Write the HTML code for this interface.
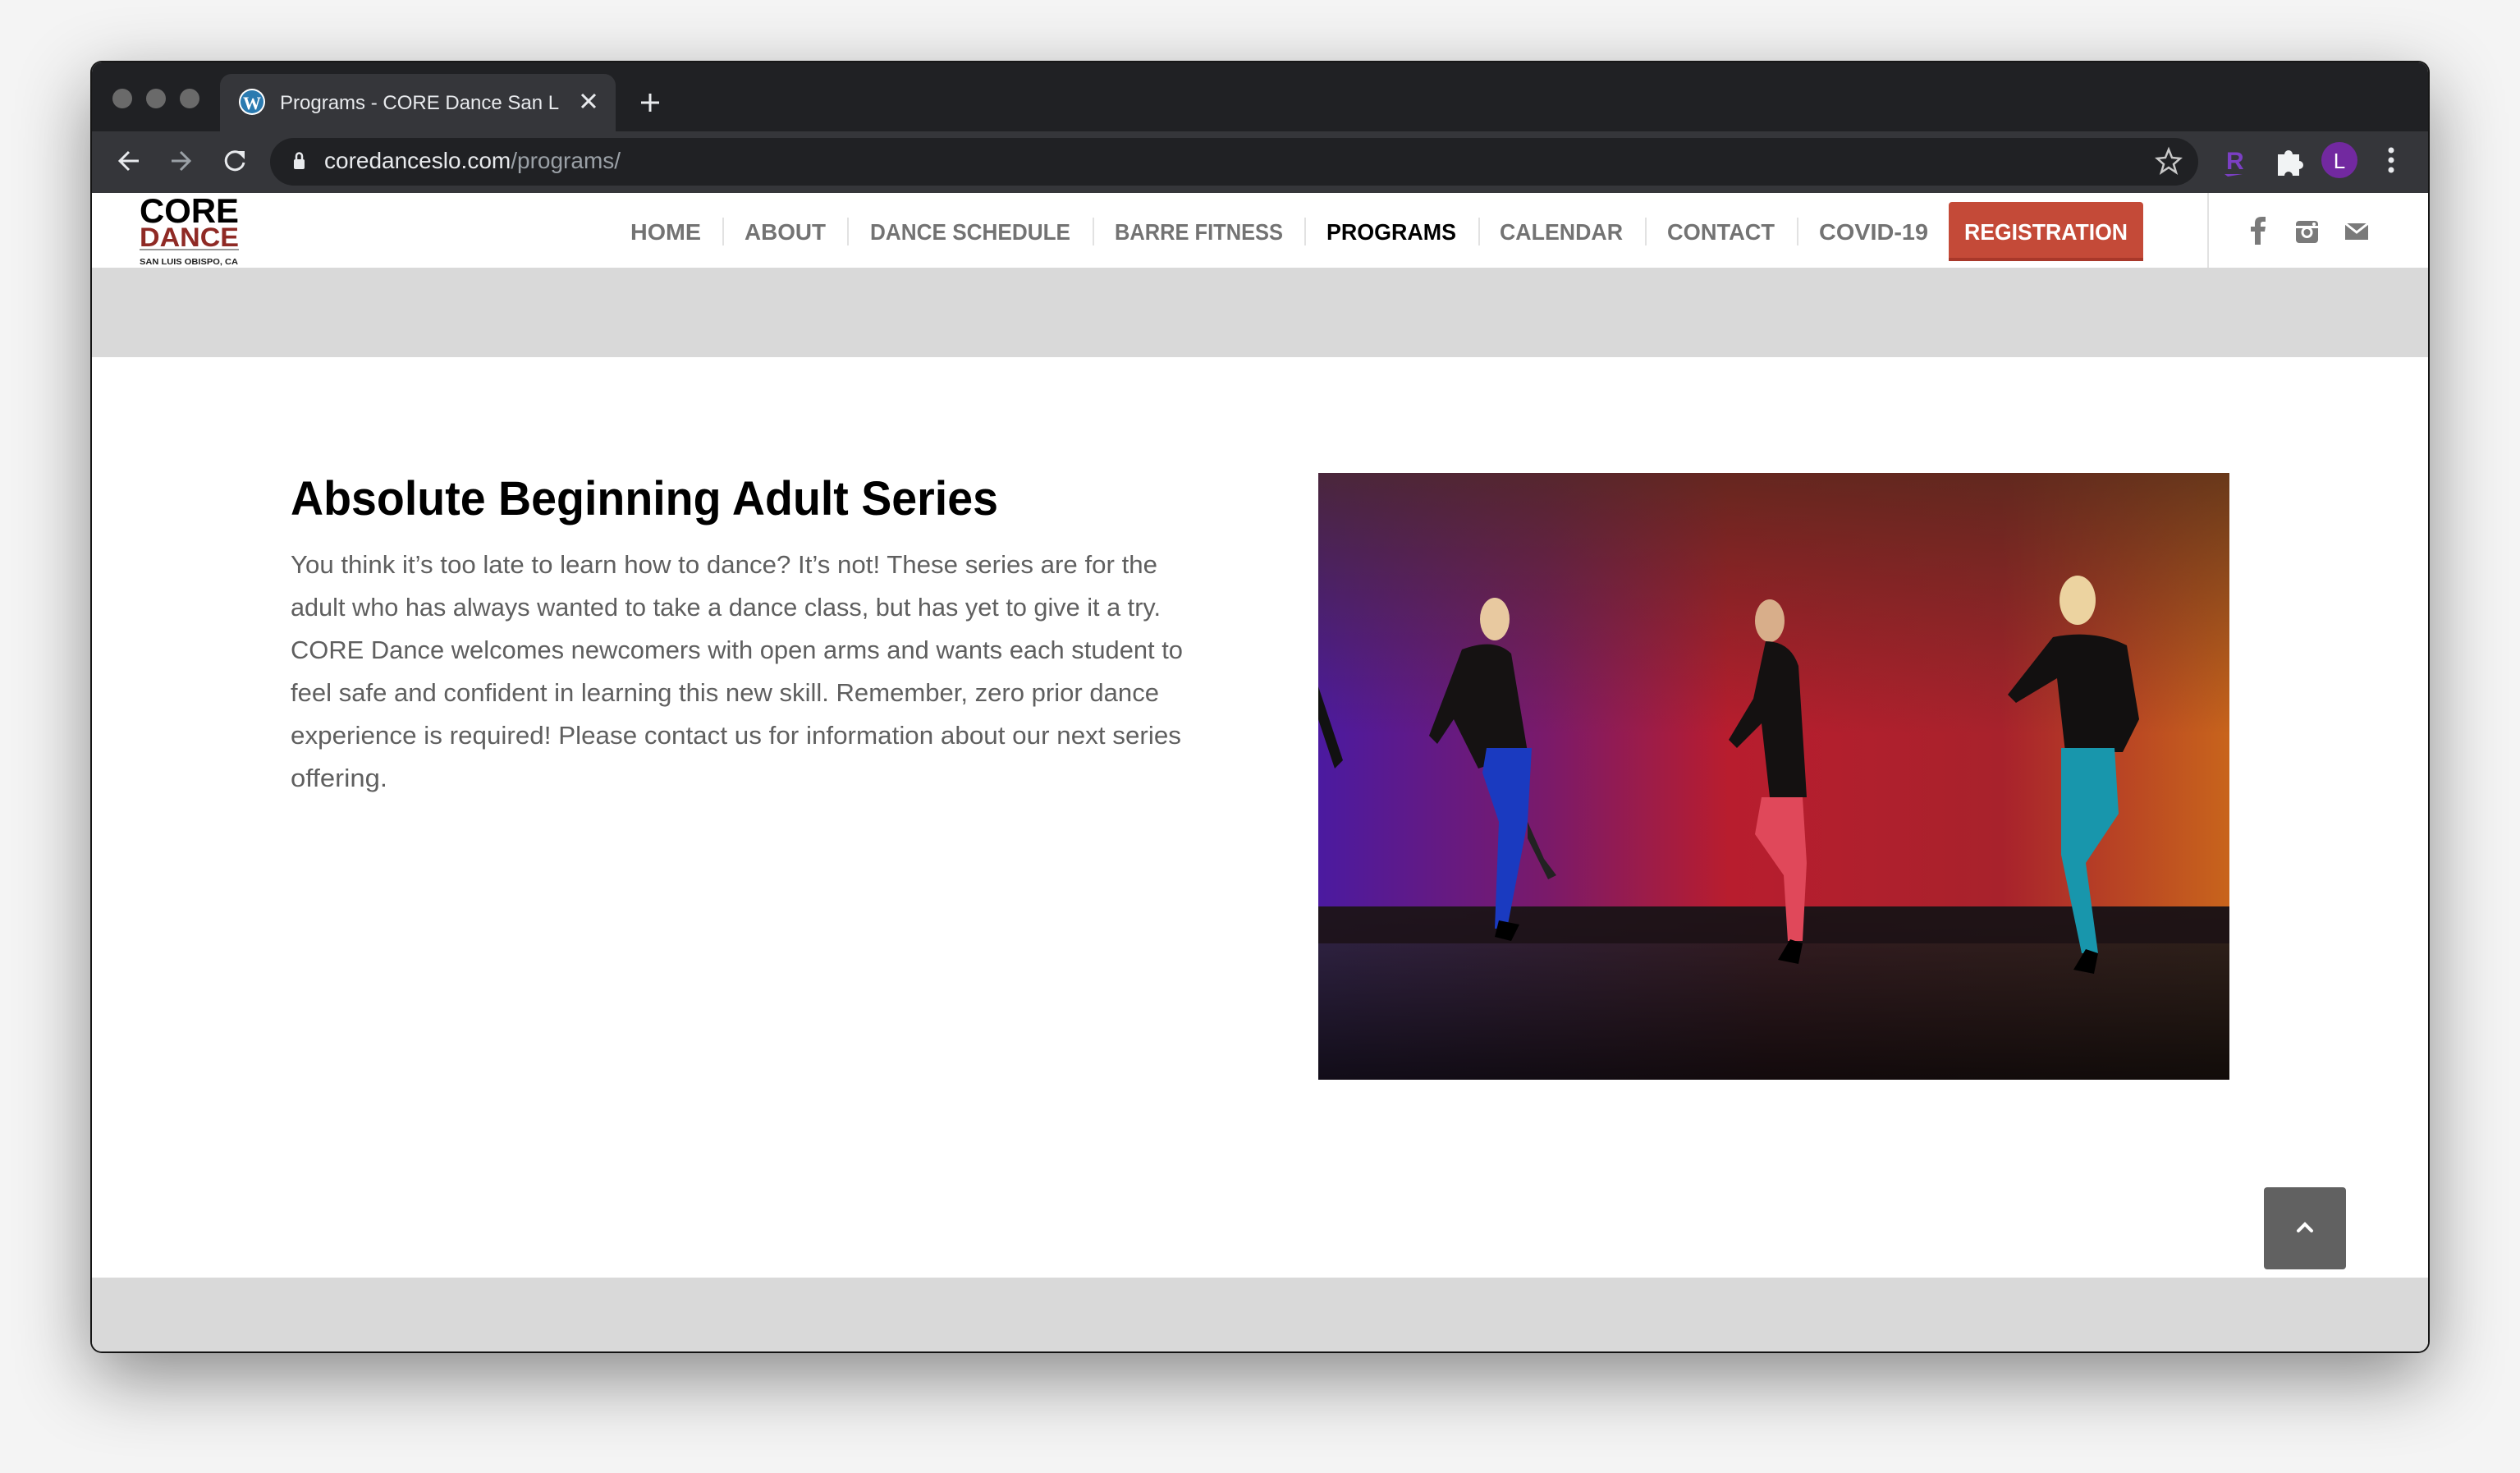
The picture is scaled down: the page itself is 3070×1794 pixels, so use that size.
<!DOCTYPE html>
<html><head><meta charset="utf-8"><style>
*{margin:0;padding:0;box-sizing:border-box}
html,body{width:3070px;height:1794px;overflow:hidden;background:#f4f4f4;font-family:"Liberation Sans",sans-serif}
#win{position:absolute;left:112px;top:76px;width:2846px;height:1570px;border-radius:12px;overflow:hidden;box-shadow:0 30px 90px rgba(0,0,0,.45),0 0 0 2px #1a1a1a;background:#fff}
.abs{position:absolute}
</style></head><body>
<div id="win">
 <div class="abs" style="left:0;top:0;width:2846px;height:84px;background:#202124"></div>
 <div class="abs" style="left:156px;top:14px;width:482px;height:72px;border-radius:14px 14px 0 0;background:#35363a"></div>
 <div class="abs" style="left:0;top:84px;width:2846px;height:75px;background:#35363a"></div>
 <div class="abs" style="left:217px;top:92px;width:2349px;height:58px;border-radius:29px;background:#202124"></div>
 <svg class="abs" style="left:0;top:0" width="2846" height="160">
  <circle cx="37" cy="44" r="12" fill="#6a6a6a"/><circle cx="78" cy="44" r="12" fill="#6a6a6a"/><circle cx="119" cy="44" r="12" fill="#6a6a6a"/>
  <circle cx="195" cy="48" r="16" fill="#fff"/><circle cx="195" cy="48" r="14" fill="#2a7ab0"/><text x="195" y="57" font-size="22" font-weight="bold" fill="#fff" text-anchor="middle" font-family="Liberation Serif">W</text>
  <text x="229" y="57" font-size="24" fill="#e8eaed">Programs - CORE Dance San L</text>
  <path d="M597 39l16 16M613 39l-16 16" stroke="#e8eaed" stroke-width="3"/>
  <path d="M680 38v22M669 49h22" stroke="#e8eaed" stroke-width="3"/>
  <path d="M57 120h-22M45 109l-11 11 11 11" stroke="#e8eaed" stroke-width="3" fill="none"/>
  <path d="M97 120h22M108 109l11 11-11 11" stroke="#9aa0a6" stroke-width="3" fill="none"/>
  <path d="M182 112a11 11 0 1 0 3 10" stroke="#e8eaed" stroke-width="3" fill="none"/><path d="M176 108h10v10z" fill="#e8eaed"/>
  <rect x="246" y="118" width="13" height="12" rx="2" fill="#e8eaed"/><path d="M249 118v-4a3.5 3.5 0 0 1 7 0v4" stroke="#e8eaed" stroke-width="2.5" fill="none"/>
  <text x="283" y="129" font-size="28" fill="#e8eaed">coredanceslo.com<tspan fill="#9aa0a6">/programs/</tspan></text>
  <path d="M2530 106l4 10 10 1-8 7 3 10-9-6-9 6 3-10-8-7 10-1z" stroke="#c8c8c8" stroke-width="2.5" fill="none"/>
  <text x="2600" y="130" font-size="30" font-weight="bold" fill="#7b3fc4">R</text><path d="M2598 136h22l-18 3z" fill="#7b3fc4"/>
  <path d="M2663 112h8a5 5 0 0 1 10 0h8v8a5 5 0 0 1 0 10v8h-8a5 5 0 0 0-10 0h-8z" fill="#f1f3f4"/>
  <circle cx="2738" cy="119" r="22" fill="#7229a0"/><text x="2738" y="129" font-size="26" fill="#fff" text-anchor="middle">L</text>
  <circle cx="2801" cy="107" r="3.5" fill="#e8eaed"/><circle cx="2801" cy="119" r="3.5" fill="#e8eaed"/><circle cx="2801" cy="131" r="3.5" fill="#e8eaed"/>
 </svg>
 <div class="abs" style="left:0;top:159px;width:2846px;height:91px;background:#fff"></div>
 <div class="abs" style="left:0;top:250px;width:2846px;height:109px;background:#d9d9d9"></div>
 <div class="abs" style="left:0;top:1480px;width:2846px;height:90px;background:#d9d9d9"></div>
 <svg class="abs" style="left:0;top:159px" width="2846" height="95">
  <text x="58" y="36" font-size="42" font-weight="bold" fill="#000" textLength="121" lengthAdjust="spacingAndGlyphs">CORE</text>
  <text x="58" y="65" font-size="32" font-weight="bold" fill="#8f2a25" textLength="121" lengthAdjust="spacingAndGlyphs">DANCE</text>
  <rect x="58" y="68" width="121" height="2" fill="#999"/>
  <text x="58" y="87" font-size="10" font-weight="bold" fill="#222" textLength="120" lengthAdjust="spacingAndGlyphs">SAN LUIS OBISPO, CA</text>
  <g font-size="28" fill="#737373" font-weight="bold">
   <text x="656" y="57" textLength="86" lengthAdjust="spacingAndGlyphs">HOME</text>
   <text x="795" y="57" textLength="99" lengthAdjust="spacingAndGlyphs">ABOUT</text>
   <text x="948" y="57" textLength="244" lengthAdjust="spacingAndGlyphs">DANCE SCHEDULE</text>
   <text x="1246" y="57" textLength="205" lengthAdjust="spacingAndGlyphs">BARRE FITNESS</text>
   <text x="1504" y="57" textLength="158" lengthAdjust="spacingAndGlyphs" fill="#000">PROGRAMS</text>
   <text x="1715" y="57" textLength="150" lengthAdjust="spacingAndGlyphs">CALENDAR</text>
   <text x="1919" y="57" textLength="131" lengthAdjust="spacingAndGlyphs">CONTACT</text>
   <text x="2104" y="57" textLength="133" lengthAdjust="spacingAndGlyphs">COVID-19</text>
  </g>
  <g fill="#e2e2e2"><rect x="768" y="30" width="2" height="34"/><rect x="920" y="30" width="2" height="34"/><rect x="1219" y="30" width="2" height="34"/><rect x="1477" y="30" width="2" height="34"/><rect x="1689" y="30" width="2" height="34"/><rect x="1892" y="30" width="2" height="34"/><rect x="2077" y="30" width="2" height="34"/><rect x="2577" y="0" width="2" height="91"/></g>
  <rect x="2262" y="11" width="237" height="72" rx="4" fill="#c44a38"/><rect x="2262" y="79" width="237" height="4" fill="#a8382a"/>
  <text x="2281" y="57" font-size="28" font-weight="bold" fill="#fff" textLength="199" lengthAdjust="spacingAndGlyphs">REGISTRATION</text>
  <rect x="1476" y="165" width="212" height="6" fill="#c44a38"/>
  <path d="M2635 63v-16h-5v-6h5v-4c0-6 3-8 9-8h4v6h-3c-2 0-3 1-3 3v3h6l-1 6h-5v16z" fill="#7a7a7a"/>
  <rect x="2685" y="34" width="27" height="27" rx="4" fill="#7a7a7a"/><rect x="2685" y="40" width="27" height="3" fill="#fff"/><circle cx="2698.5" cy="48" r="7" fill="#fff"/><circle cx="2698.5" cy="48" r="4" fill="#7a7a7a"/><circle cx="2707" cy="38" r="2" fill="#fff"/>
  <path d="M2745 37h28v20h-28z" fill="#7a7a7a"/><path d="M2745 37l14 11 14-11" stroke="#fff" stroke-width="3" fill="none"/>
 </svg>
 <svg class="abs" style="left:0;top:459px" width="1500" height="560">
  <text x="242" y="92" font-size="58" font-weight="bold" fill="#000" textLength="862" lengthAdjust="spacingAndGlyphs">Absolute Beginning Adult Series</text>
  <g font-size="31" fill="#5f5f5f">
   <text x="242" y="163" textLength="1056" lengthAdjust="spacingAndGlyphs">You think it’s too late to learn how to dance? It’s not! These series are for the</text>
   <text x="242" y="215" textLength="1060" lengthAdjust="spacingAndGlyphs">adult who has always wanted to take a dance class, but has yet to give it a try.</text>
   <text x="242" y="267" textLength="1087" lengthAdjust="spacingAndGlyphs">CORE Dance welcomes newcomers with open arms and wants each student to</text>
   <text x="242" y="319" textLength="1058" lengthAdjust="spacingAndGlyphs">feel safe and confident in learning this new skill. Remember, zero prior dance</text>
   <text x="242" y="371" textLength="1085" lengthAdjust="spacingAndGlyphs">experience is required! Please contact us for information about our next series</text>
   <text x="242" y="423" textLength="118" lengthAdjust="spacingAndGlyphs">offering.</text>
  </g>
 </svg>
 <svg class="abs" style="left:1494px;top:500px" width="1110" height="739" viewBox="0 0 1110 739">
  <defs>
   <linearGradient id="bg" x1="0" x2="1" y1="0" y2="0"><stop offset="0" stop-color="#4b1aa0"/><stop offset=".25" stop-color="#7a1a6a"/><stop offset=".45" stop-color="#b81d2e"/><stop offset=".75" stop-color="#a8222c"/><stop offset="1" stop-color="#c8641c"/></linearGradient>
   <linearGradient id="top" x1="0" x2="0" y1="0" y2="1"><stop offset="0" stop-color="#4a2a1a" stop-opacity=".75"/><stop offset=".6" stop-color="#4a2a1a" stop-opacity="0"/></linearGradient>
   <linearGradient id="fl" x1="0" x2="1" y1="0" y2="0"><stop offset="0" stop-color="#3a2a52"/><stop offset=".5" stop-color="#3e2228"/><stop offset="1" stop-color="#3a2820"/></linearGradient>
   <linearGradient id="fd" x1="0" x2="0" y1="0" y2="1"><stop offset="0" stop-color="#000" stop-opacity=".1"/><stop offset="1" stop-color="#000" stop-opacity=".7"/></linearGradient>
  </defs>
  <rect width="1110" height="739" fill="url(#bg)"/>
  <rect width="1110" height="530" fill="url(#top)"/>
  <rect y="528" width="1110" height="211" fill="url(#fl)"/>
  <rect y="528" width="1110" height="211" fill="url(#fd)"/>
  <rect y="528" width="1110" height="45" fill="#1a1014" opacity=".8"/>
  <g fill="#111"><path d="M0 260l30 90-10 10-20-60z"/></g>
  <ellipse cx="215" cy="178" rx="18" ry="26" fill="#e8c9a0"/>
  <path d="M175 215q40-15 60 5l20 120-60 20-30-60-20 30-10-10z" fill="#151212"/>
  <path d="M205 335h55l-5 90-25 130h-15l5-130-20-60z" fill="#1a3ac0"/>
  <path d="M220 545l-5 20 20 5 10-20z" fill="#000"/>
  <path d="M255 425l20 45 15 20-10 5-25-50z" fill="#222"/>
  <ellipse cx="550" cy="180" rx="18" ry="26" fill="#d8ae8a"/>
  <path d="M545 205q30 0 40 30l10 160h-45l-10-90-30 30-10-10 30-50z" fill="#141111"/>
  <path d="M540 395h50l5 80-5 95h-18l-5-80-35-50z" fill="#e0485a"/>
  <path d="M575 568l-15 25 25 5 5-25z" fill="#000"/>
  <ellipse cx="925" cy="155" rx="22" ry="30" fill="#ecd3a0"/>
  <path d="M895 200q50-10 90 10l15 90-20 40h-70l-10-90-50 30-10-10z" fill="#121010"/>
  <path d="M905 335h65l5 80-40 60 15 110h-20l-25-120z" fill="#1896ac"/>
  <path d="M935 580l-15 25 25 5 5-25z" fill="#000"/>
 </svg>
 <div class="abs" style="left:2646px;top:1370px;width:100px;height:100px;border-radius:4px;background:#616161"></div>
 <svg class="abs" style="left:2646px;top:1370px" width="100" height="100"><path d="M42 53l8-8 8 8" stroke="#fff" stroke-width="4" fill="none" stroke-linecap="round"/></svg>
</div>
</body></html>
